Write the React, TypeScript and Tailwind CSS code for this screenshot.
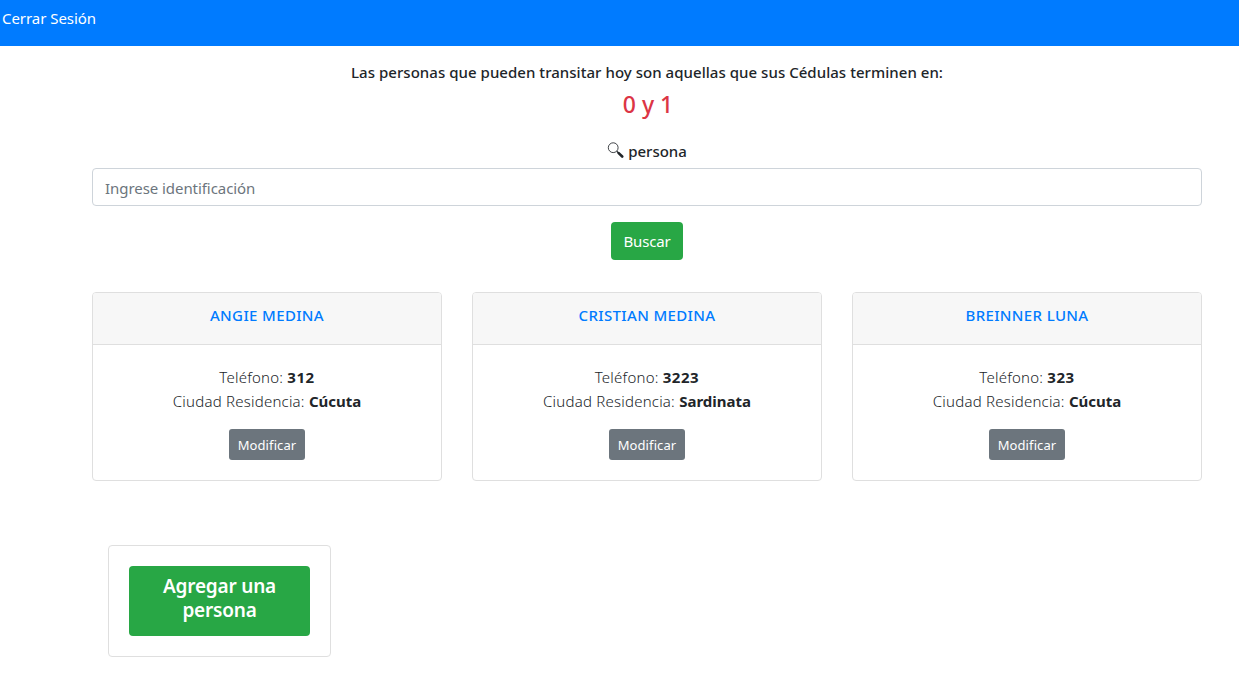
const people = [
  { name: "ANGIE MEDINA", phone: "312", city: "Cúcuta" },
  { name: "CRISTIAN MEDINA", phone: "3223", city: "Sardinata" },
  { name: "BREINNER LUNA", phone: "323", city: "Cúcuta" },
];

function SearchIcon() {
  return (
    <svg className="mt-px h-[17px] w-[17px]" viewBox="0 0 17 17" fill="none" stroke="#212529">
      <circle cx="6.2" cy="5.7" r="4.9" strokeWidth="1" strokeOpacity="0.85" />
      <path d="M9.8 9.3l2 1.9" strokeWidth="1.2" />
      <path d="M11.7 11.1l3.5 3.4" strokeWidth="2.6" strokeLinecap="round" />
    </svg>
  );
}

function PersonCard({ name, phone, city }: { name: string; phone: string; city: string }) {
  return (
    <article className="rounded border border-[#dfdfdf] text-center">
      <header className="h-[52px] rounded-t-[3px] border-b border-[#dfdfdf] bg-[#f7f7f7] pt-3">
        <h6 className="leading-5 font-medium tracking-[0.36px] text-[#007bff]">{name}</h6>
      </header>
      <div className="flex flex-col items-center p-5">
        <p className="mb-4 leading-6 font-[350] tracking-[0.22px]">
          Teléfono: <b className="font-bold tracking-[0.55px]">{phone}</b>
          <br />
          Ciudad Residencia: <b className="font-bold tracking-normal">{city}</b>
        </p>
        <button className="h-[31px] w-[76px] rounded-[3px] bg-[#6c757d] pt-0.5 text-[13px] tracking-[0.1px] text-white">
          Modificar
        </button>
      </div>
    </article>
  );
}

export default function App() {
  return (
    <div className="min-h-[682px] bg-white font-['Noto_Sans',sans-serif] text-[15px] text-[#212529]">
      <nav className="h-[46px] bg-[#007bff] pt-1.5 pl-0.5 leading-6 tracking-[-0.05px] text-white">
        <a href="#">Cerrar Sesión</a>
      </nav>
      <main className="ml-[92px] w-[1110px] pt-4">
        <section className="flex flex-col items-center">
          <h6 className="leading-5 font-medium tracking-[0.04px]">
            Las personas que pueden transitar hoy son aquellas que sus Cédulas terminen en:
          </h6>
          <h4 className="mt-2 pl-0.5 text-[23px] leading-[29px] font-medium text-[#dc3545]">0 y 1</h4>
          <label htmlFor="search" className="mt-[22px] flex gap-1 leading-5 font-medium">
            <SearchIcon />
            persona
          </label>
          <input
            id="search"
            placeholder="Ingrese identificación"
            className="mt-[7px] h-[38px] w-full rounded border border-[#ced4da] px-3 pt-0.5 tracking-[-0.06px] placeholder:text-[#6c757d]"
          />
          <button className="mt-4 h-[38px] w-[72px] rounded bg-[#28a745] tracking-[-0.15px] text-white">Buscar</button>
        </section>
        <section className="mt-8 grid grid-cols-3 gap-[30px]">
          {people.map((person) => (
            <PersonCard key={person.name} {...person} />
          ))}
        </section>
        <section className="mt-16 ml-4 h-28 w-[223px] rounded border border-[#dfdfdf] p-5">
          <button className="h-[70px] w-full rounded bg-[#28a745] px-6 pb-1.5 text-[19px] leading-6 font-semibold tracking-[-0.2px] text-white">
            Agregar una persona
          </button>
        </section>
      </main>
    </div>
  );
}
